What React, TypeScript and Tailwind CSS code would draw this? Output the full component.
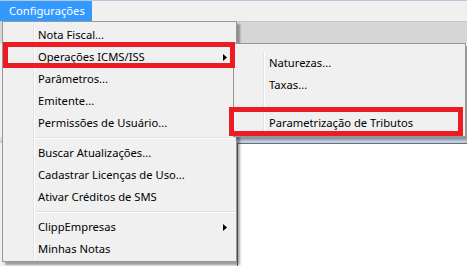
import React from 'react';

type Item = { label?: string; sub?: boolean; sep?: boolean; blank?: boolean };

const mainItems: Item[] = [
  { label: 'Nota Fiscal...' },
  { label: 'Operações ICMS/ISS', sub: true },
  { label: 'Parâmetros...' },
  { label: 'Emitente...' },
  { label: 'Permissões de Usuário...' },
  { sep: true },
  { label: 'Buscar Atualizações...' },
  { label: 'Cadastrar Licenças de Uso...' },
  { label: 'Ativar Créditos de SMS' },
  { sep: true },
  { label: 'ClippEmpresas', sub: true },
  { label: 'Minhas Notas' },
];

const subItems: Item[] = [
  { label: 'Naturezas...' },
  { label: 'Taxas...' },
  { blank: true },
  { label: 'Parametrização de Tributos' },
];

const Arrow = () => (
  <svg width="4" height="7" viewBox="0 0 4 7" className="absolute right-[8px] top-[8px]">
    <path d="M0 0 L4 3.5 L0 7 Z" fill="#000" />
  </svg>
);

const MenuList = ({ items, gutter }: { items: Item[]; gutter: string }) => (
  <div className="relative">
    <div className={`absolute top-0 bottom-0 ${gutter} w-[2px] border-l border-[#e2e3e3] bg-white`} />
    {items.map((it, i) => {
      if (it.sep)
        return (
          <div key={i} className="h-[8px] flex items-center pl-[30px]">
            <div className="h-[2px] w-full border-t border-[#e0e0e0] bg-white" />
          </div>
        );
      if (it.blank) return <div key={i} className="h-[16px]" />;
      return (
        <div key={i} className="relative h-[22px] flex items-center pl-[34px] text-black whitespace-nowrap">
          {it.label}
          {it.sub && <Arrow />}
        </div>
      );
    })}
  </div>
);

const App: React.FC = () => {
  return (
    <div
      className="relative w-[467px] h-[266px] overflow-hidden bg-[#f0f0f0] text-[11.2px] leading-none"
      style={{ fontFamily: '"Noto Sans", "Open Sans", sans-serif' }}
    >
      {/* background window */}
      <div className="flex flex-col h-full">
        <div className="h-[1px] bg-[#b9c9da]" />
        <div className="h-[20px] flex items-stretch">
          <div className="bg-[#3399ff] text-white pl-[9px] flex items-center w-[92px]">Configurações</div>
        </div>
        <div className="h-[22px] bg-[#d6d6d6] border-t border-[#c8c8c8]" />
        <div className="h-[94px] bg-[#f0f0f0]" />
        <div className="h-[6px] bg-gradient-to-b from-[#dce7f3] to-[#b7cbe3]" />
        <div className="flex-1 bg-white border-t border-l border-[#6e6e6e] ml-[237px]" />
      </div>

      {/* main dropdown */}
      <div className="absolute left-[2px] top-[21px] w-[235px] h-[241px] bg-[#f0f0f0] border border-[#979797] p-[1px] pt-[2px] shadow-[3px_3px_2px_rgba(0,0,0,0.35)]">
        <MenuList items={mainItems} gutter="left-[29px]" />
      </div>

      {/* submenu */}
      <div className="absolute left-[233px] top-[43px] w-[233px] h-[94px] bg-[#f0f0f0] border border-[#979797] p-[1px] pt-[8px] shadow-[3px_3px_2px_rgba(0,0,0,0.35)]">
        <MenuList items={subItems} gutter="left-[28px]" />
      </div>

      {/* annotation boxes */}
      <div className="absolute left-[3px] top-[42px] w-[232px] h-[26px] border-[5px] border-[#ed1c24]" />
      <div className="absolute left-[229px] top-[107px] w-[234px] h-[29px] border-[5px] border-[#ed1c24]" />
    </div>
  );
};

export default App;
